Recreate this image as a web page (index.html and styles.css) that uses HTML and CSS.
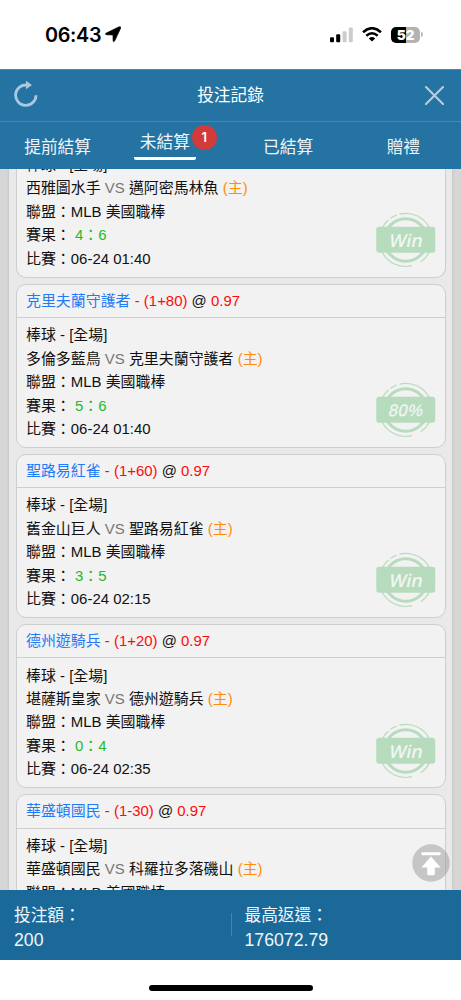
FILE: index.html
```html
<!DOCTYPE html>
<html lang="zh-TW">
<head>
<meta charset="utf-8">
<meta name="viewport" content="width=device-width">
<title>投注記錄</title>
<link rel="stylesheet" href="styles.css">
</head>
<body>
<svg class="defs" width="0" height="0" aria-hidden="true">
  <symbol id="stamp" viewBox="0 0 60 56">
    <g fill="none" stroke="#b6dcbd">
      <circle cx="29.7" cy="28" r="21.3" stroke-width="3"/>
      <path stroke-width="1.2" d="M23.5 2.1A26.5 26.5 0 0 1 53.5 16M6 16.2A26.5 26.5 0 0 1 12.5 8M14.5 6.3A26.5 26.5 0 0 1 20.8 3M6 39.8A26.5 26.5 0 0 0 36 53.7M53.5 39.8A26.5 26.5 0 0 1 44.8 49.8"/>
    </g>
    <rect x="0.3" y="14.8" width="58.9" height="26" rx="2.8" fill="#b6dcbd"/>
  </symbol>
</svg>
<div class="app">
  <div class="status">
    <span class="clock">06:43</span>
    <svg class="loc" width="17" height="17" viewBox="0 0 17 17"><path d="M1 7.2 13.8.9Q16.4 0 15.5 2.5L9.6 15Q8.5 16.8 8.1 14.7L8 8.9 1.9 8.8Q-.8 8.3 1 7.2Z" stroke="#000" stroke-width=".7"/></svg>
    <svg class="signal" width="24" height="16" viewBox="0 0 24 16"><rect x="0" y="10.3" width="4" height="5" rx="1"/><rect x="6.2" y="7.2" width="4" height="8.1" rx="1"/><g fill="#ccc"><rect x="12.6" y="4.2" width="4" height="11.1" rx="1"/><rect x="18.8" y=".5" width="4" height="14.8" rx="1"/></g></svg>
    <svg class="wifi" width="20" height="15" viewBox="0 0 20 15"><g fill="none" stroke="#000" stroke-width="2.5"><path d="M1 5.2Q10-2.8 19 5.2"/><path d="M4.3 8.7Q10 3.7 15.7 8.7"/></g><path d="M6.8 11.4Q10 8.6 13.2 11.4L10 14.6Z"/></svg>
    <div class="battery"><b>5</b><b>2</b></div>
  </div>
  <header class="bar">
    <svg class="refresh" width="24" height="28" viewBox="0 0 24 28"><path d="M22 15.2A10.2 10.2 0 1 1 13.3 5.1" fill="none" stroke="#a9c8dc" stroke-width="2.8"/><path d="M12 .8 18 5.1 12 9.2Z" fill="#a9c8dc"/></svg>
    <h1>投注記錄</h1>
    <svg class="close" width="19" height="19" viewBox="0 0 19 19"><path d="M1 1 18 18M18 1 1 18" fill="none" stroke="#b3cfe0" stroke-width="2.1" stroke-linecap="round"/></svg>
  </header>
  <nav class="tabs">
    <a>提前結算</a>
    <a class="active"><span>未結算<i class="badge">1</i></span></a>
    <a>已結算</a>
    <a>贈禮</a>
  </nav>
  <main class="content">
    <div class="list">
      <article class="card scrolled">
        <div class="info">
          <p>棒球 - [全場]</p>
          <p>西雅圖水手 <span class="vs">VS</span> 邁阿密馬林魚 <span class="home">(主)</span></p>
          <p>聯盟：MLB 美國職棒</p>
          <p>賽果： <span class="score">4：6</span></p>
          <p>比賽：06-24 01:40</p>
        </div>
        <div class="stamp"><svg width="60" height="56"><use href="#stamp"/></svg><span class="win">Win</span></div>
      </article>
      <article class="card">
        <h2><strong>克里夫蘭守護者</strong> <em>- (1+80)</em> @ <em>0.97</em></h2>
        <div class="info">
          <p>棒球 - [全場]</p>
          <p>多倫多藍鳥 <span class="vs">VS</span> 克里夫蘭守護者 <span class="home">(主)</span></p>
          <p>聯盟：MLB 美國職棒</p>
          <p>賽果： <span class="score">5：6</span></p>
          <p>比賽：06-24 01:40</p>
        </div>
        <div class="stamp"><svg width="60" height="56"><use href="#stamp"/></svg><span class="pct">80%</span></div>
      </article>
      <article class="card">
        <h2><strong>聖路易紅雀</strong> <em>- (1+60)</em> @ <em>0.97</em></h2>
        <div class="info">
          <p>棒球 - [全場]</p>
          <p>舊金山巨人 <span class="vs">VS</span> 聖路易紅雀 <span class="home">(主)</span></p>
          <p>聯盟：MLB 美國職棒</p>
          <p>賽果： <span class="score">3：5</span></p>
          <p>比賽：06-24 02:15</p>
        </div>
        <div class="stamp"><svg width="60" height="56"><use href="#stamp"/></svg><span class="win">Win</span></div>
      </article>
      <article class="card">
        <h2><strong>德州遊騎兵</strong> <em>- (1+20)</em> @ <em>0.97</em></h2>
        <div class="info">
          <p>棒球 - [全場]</p>
          <p>堪薩斯皇家 <span class="vs">VS</span> 德州遊騎兵 <span class="home">(主)</span></p>
          <p>聯盟：MLB 美國職棒</p>
          <p>賽果： <span class="score">0：4</span></p>
          <p>比賽：06-24 02:35</p>
        </div>
        <div class="stamp"><svg width="60" height="56"><use href="#stamp"/></svg><span class="win">Win</span></div>
      </article>
      <article class="card">
        <h2><strong>華盛頓國民</strong> <em>- (1-30)</em> @ <em>0.97</em></h2>
        <div class="info">
          <p>棒球 - [全場]</p>
          <p>華盛頓國民 <span class="vs">VS</span> 科羅拉多落磯山 <span class="home">(主)</span></p>
          <p>聯盟：MLB 美國職棒</p>
        </div>
      </article>
    </div>
    <svg class="top" width="38" height="38" viewBox="0 0 38 38"><circle cx="19" cy="19" r="18.7" fill="#999" fill-opacity=".5"/><g fill="#fff"><rect x="9.3" y="8.2" width="19.4" height="3" rx="1.2"/><path d="M19 12.6 28.6 23.5H22.8V30Q22.8 31.3 21.5 31.3H16.5Q15.2 31.3 15.2 30V23.5H9.4Z"/></g></svg>
  </main>
  <footer class="totals">
    <div><span>投注額：</span><span>200</span></div>
    <div><span>最高返還：</span><span>176072.79</span></div>
  </footer>
  <div class="homebar"><i></i></div>
</div>
</body>
</html>
```
FILE: styles.css
```css
* { box-sizing: border-box; }
body, h1, h2, p { margin: 0; }
h1, h2, strong { font-weight: 400; }
em, i { font-style: normal; }
svg { display: block; flex: none; }
body { background: #fff; font-family: "Liberation Sans", "Noto Sans CJK TC", sans-serif; color: #111; }
.defs { position: absolute; }
.app { width: 461px; height: 1000px; display: flex; flex-direction: column; overflow: hidden; }

.status { height: 69px; flex: none; display: flex; align-items: center; padding: 0 41px 0 45px; }
.clock { font: 600 19.8px/24px Inter, sans-serif; width: 57px; letter-spacing: -.3px; white-space: nowrap; color: #000; }
.loc { margin-left: 3px; }
.signal { margin-left: auto; }
.wifi { margin: 0 9px 0 8px; }
.battery { position: relative; width: 29px; height: 16px; border-radius: 5px; flex: none; display: flex; justify-content: center; align-items: center; background: linear-gradient(90deg, #000 52%, #b3b3b3 52%); color: #fff; font: 700 13.5px/16px Inter, sans-serif; }
.battery::after { content: ""; position: absolute; right: -3px; top: 5.5px; width: 2px; height: 5px; border-radius: 0 2px 2px 0; background: #bbb; }

.bar { height: 53px; flex: none; display: flex; align-items: center; justify-content: space-between; padding: 0 17px 0 14px; background: #2473a3; border-top: 1px solid #4389b1; border-bottom: 1px solid #4389b1; color: #fff; }
.refresh { margin-bottom: 3px; }
.bar h1 { font-size: 16.7px; line-height: 24px; padding-right: 2px; }
.tabs { height: 47px; flex: none; display: grid; grid-template-columns: repeat(4, 1fr); background: #2473a3; color: #eef5f9; font-size: 16.7px; line-height: 24px; }
.tabs a { text-align: center; padding-top: 14px; }
.tabs .active { display: flex; justify-content: center; padding-top: 9px; padding-right: 16px; }
.active span { position: relative; padding: 0 6px; height: 29px; border-bottom: 3.5px solid #fff; border-radius: 2px; }
.badge { position: absolute; left: 58px; top: -6px; width: 25px; height: 25px; border-radius: 50%; background: #d33a3a; color: #fff; text-align: center; font: 600 13px/25px Inter, sans-serif; }

.content { height: 721px; flex: none; position: relative; overflow: hidden; background: #d6d6d6; padding: 0 9px; }
.list { background: #e9e9e9; height: 721px; padding: 0 6.5px; box-shadow: 0 0 3px #bbb; display: flex; flex-direction: column; gap: 6.2px; }
.card { position: relative; height: 164px; flex: none; background: #f2f2f2; border: 1.4px solid #cecece; border-radius: 10px; font-size: 14.95px; line-height: 23.4px; white-space: nowrap; }
.card.scrolled { height: 130.8px; margin-top: -22.2px; border-top: 0; border-radius: 0 0 10px 10px; }
.card h2 { font-size: inherit; height: 33.2px; line-height: 32px; padding-left: 9.5px; border-bottom: 1.4px solid #cecece; }
.card strong { color: #1f7bf6; }
.card em { color: #ff0a0a; }
.info { padding: 5.3px 0 0 9.5px; }
.scrolled .info { padding-top: 6.1px; }
.vs { color: #777; }
.home { color: #ff8c0a; }
.score { color: #28b928; }
.stamp { position: absolute; right: 8.5px; bottom: 8.6px; width: 60px; height: 56px; }
.stamp svg { width: 60px; height: 56px; }
.stamp span { position: absolute; inset: 15px 0 15px 1px; text-align: center; color: #f2f5f2; font: 600 18px/26px "Open Sans", sans-serif; transform: skewX(-12deg); }
.stamp .pct { font: 400 16.5px/26px "Liberation Sans", sans-serif; letter-spacing: .6px; -webkit-text-stroke: .3px #f2f5f2; }
.top { position: absolute; right: 11.5px; bottom: 8px; }

.totals { height: 70px; flex: none; display: grid; grid-template-columns: 231px 1fr; align-items: center; background: #1a6999; color: #f0f6fa; font-size: 16.7px; line-height: 24px; }
.totals div { display: flex; flex-direction: column; padding: 6px 0 0 14px; }
.totals div + div { position: relative; padding-left: 13.5px; }
.totals div + div::before { content: ""; position: absolute; left: 0; top: 15px; width: 1px; height: 23px; background: #4586ac; }
.totals span + span { font-size: 17.7px; }
.homebar { flex: 1; padding: 25px 0 0 149px; }
.homebar i { display: block; width: 164px; height: 6px; border-radius: 3px; background: #000; }
```
